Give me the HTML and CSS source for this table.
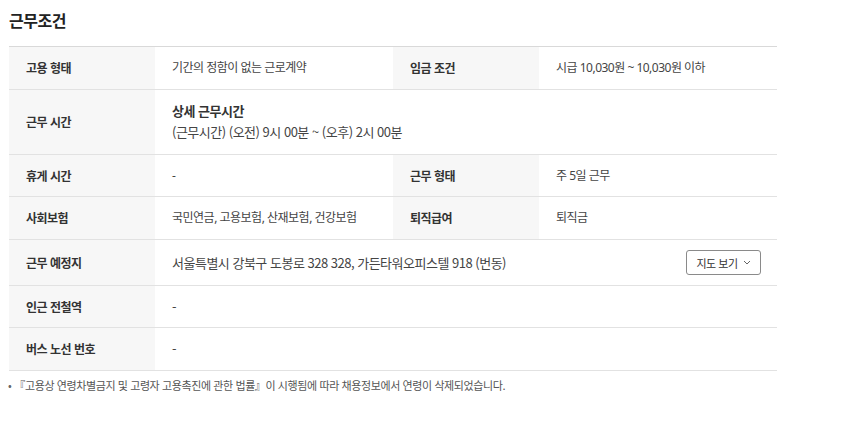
FILE: index.html
```html
<!DOCTYPE html>
<html lang="ko">
<head>
<meta charset="utf-8">
<link rel="stylesheet" href="styles.css">
</head>
<body>
<section class="wrap">
  <h2 class="title">근무조건</h2>
  <div class="info">
    <div class="row">
      <div class="k">고용 형태</div><div class="v">기간의 정함이 없는 근로계약</div>
      <div class="k">임금 조건</div><div class="v">시급 10,030원 ~ 10,030원 이하</div>
    </div>
    <div class="row">
      <div class="k">근무 시간</div>
      <div class="v wide detail"><div class="line sub">상세 근무시간</div><div class="line">(근무시간) (오전) 9시 00분 ~ (오후) 2시 00분</div></div>
    </div>
    <div class="row tight">
      <div class="k">휴게 시간</div><div class="v">-</div>
      <div class="k">근무 형태</div><div class="v">주 5일 근무</div>
    </div>
    <div class="row">
      <div class="k">사회보험</div><div class="v">국민연금, 고용보험, 산재보험, 건강보험</div>
      <div class="k">퇴직급여</div><div class="v">퇴직금</div>
    </div>
    <div class="row addr">
      <div class="k">근무 예정지</div>
      <div class="v wide addr-row"><span>서울특별시 강북구 도봉로 328 328, 가든타워오피스텔 918 (번동)</span><button class="map-btn" type="button">지도 보기<svg width="8" height="5" viewBox="0 0 8 5"><path d="M1 1l3 3 3-3" fill="none" stroke="#666" stroke-width="1"/></svg></button></div>
    </div>
    <div class="row tight">
      <div class="k">인근 전철역</div><div class="v wide">-</div>
    </div>
    <div class="row">
      <div class="k">버스 노선 번호</div><div class="v wide">-</div>
    </div>
  </div>
  <p class="note">『고용상 연령차별금지 및 고령자 고용촉진에 관한 법률』이 시행됨에 따라 채용정보에서 연령이 삭제되었습니다.</p>
</section>
</body>
</html>
```
FILE: styles.css
```css
html, body { margin: 0; padding: 0; background: #fff; }
body { font-family: "Noto Sans CJK KR", "Noto Sans", sans-serif; color: #333; }
.wrap { padding: 9px 0 0 9px; width: 768px; }
.title { margin: 0 0 15px; font-size: 16px; line-height: 22px; font-weight: 700; color: #222; letter-spacing: -0.5px; }
.info { width: 768px; border-top: 1px solid #d9d9d9; }
.row { display: grid; grid-template-columns: 146px 238px 146px 238px; border-bottom: 1px solid #e2e2e2; }
.k, .v { display: flex; align-items: center; min-height: 42px; box-sizing: border-box; padding: 0 17px; font-size: 12px; line-height: 22px; letter-spacing: -0.5px; white-space: nowrap; }
.tight .k, .tight .v { min-height: 41px; }
.k { background: #f7f7f7; font-weight: 700; color: #333; }
.v { font-family: "Noto Sans", "Noto Sans CJK KR", sans-serif; color: #444; font-weight: 400; }
.v.wide { grid-column: span 3; font-family: "Noto Sans CJK KR", sans-serif; font-size: 13px; }
.detail { flex-direction: column; align-items: flex-start; justify-content: flex-start; padding-top: 10px; padding-bottom: 12px; }
.line { height: 21px; line-height: 21px; }
.sub { font-weight: 700; color: #333; }
.addr .k, .addr .v { min-height: 45px; }
.addr-row { justify-content: space-between; }
.map-btn { display: flex; align-items: center; gap: 5px; height: 25px; width: 75px; justify-content: center; margin-right: -1px; padding: 0; background: #fff; border: 1px solid #8a8a8a; border-radius: 3px; font-family: "Noto Sans CJK KR", sans-serif; font-size: 11px; color: #333; letter-spacing: -0.5px; }
.note { margin: 6px 0 0; font-size: 11px; line-height: 16px; color: #555; letter-spacing: -0.4px; }
.note::before { content: "•"; margin: 0 3px 0 -1px; color: #666; }
```
